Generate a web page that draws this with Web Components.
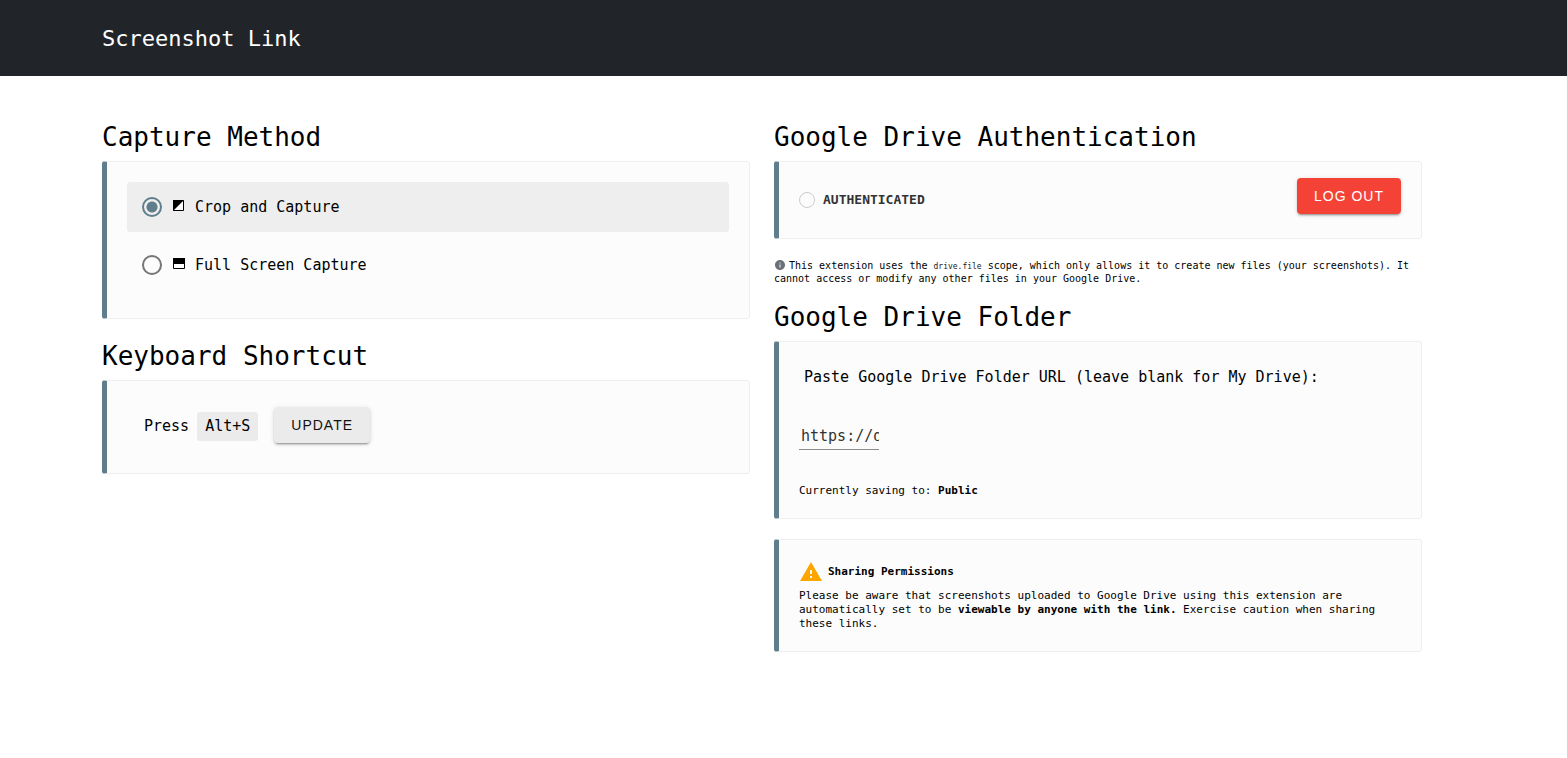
<!DOCTYPE html>
<html lang="en">
<head>
<meta charset="utf-8">
<meta name="viewport" content="width=device-width, initial-scale=1">
<title>Screenshot Link</title>
<style>
  body { margin: 0; background: #fff; color: #000; font: 15px/20px "DejaVu Sans Mono", monospace; }
</style>
</head>
<body>
<options-page></options-page>
<script>
const define = (name, html) => customElements.define(name, class extends HTMLElement {
  constructor() {
    super();
    const t = document.createElement('template');
    t.innerHTML = html;
    this.attachShadow({ mode: 'open' }).append(t.content.cloneNode(true));
  }
});

define('app-bar', `
  <style>
    :host { display: block; background: #212529; color: #fff; padding: 20px 102px 18px; }
    h1 { margin: 0; font-size: 22px; line-height: 38px; font-weight: 400; }
  </style>
  <header><h1><slot></slot></h1></header>`);

define('section-title', `
  <style>
    :host { display: block; }
    h2 { margin: 0 0 7px; font-size: 26px; line-height: 34px; font-weight: 400; }
  </style>
  <h2><slot></slot></h2>`);

define('option-card', `
  <style>
    :host { display: block; box-sizing: border-box; padding: var(--card-padding, 20px);
      background: #fcfcfc; border: 1px solid #eee; border-left: 5px solid #607d8b; border-radius: 3px; }
  </style>
  <slot></slot>`);

define('raised-button', `
  <style>
    :host { display: block; flex: none; }
    button { display: block; height: 36px; padding: 0 17px; border: 0; border-radius: 4px;
      background: var(--button-bg, #ebebeb); color: var(--button-fg, #111);
      font: 14px/36px "Liberation Sans", Arial, sans-serif; letter-spacing: 1px; text-transform: uppercase; cursor: pointer;
      box-shadow: 0 3px 1px -2px rgba(0,0,0,.2), 0 2px 2px 0 rgba(0,0,0,.14), 0 1px 5px 0 rgba(0,0,0,.12); }
  </style>
  <button type="button"><slot></slot></button>`);

define('capture-methods', `
  <style>
    :host { display: block; }
    label { display: flex; align-items: center; height: 50px; margin-bottom: 8px; padding-left: 15px; border-radius: 3px; }
    label:has(:checked) { background: #eee; }
    input { appearance: none; box-sizing: border-box; width: 20px; height: 20px; margin: 0 11px 0 0;
      border: 2px solid #757575; border-radius: 50%; }
    input:checked { border-color: #607d8b; background: radial-gradient(circle, #607d8b 5px, transparent 6px); }
    svg { width: 12px; height: 12px; margin: 0 10px 2px 0; }
  </style>
  <label><input type="radio" name="method" checked>
    <svg viewBox="0 0 12 12" aria-hidden="true"><path d="M.5 .5h10v10H.5z" fill="#fff" stroke="#000"/><path d="M0 0h11L0 11z"/></svg>
    <span>Crop and Capture</span></label>
  <label><input type="radio" name="method">
    <svg viewBox="0 0 12 12" aria-hidden="true"><path d="M.5 .5h11v10H.5z" fill="#fff" stroke="#000"/><path d="M0 0h12v6H0z"/></svg>
    <span>Full Screen Capture</span></label>`);

define('shortcut-row', `
  <style>
    :host { display: flex; align-items: flex-start; gap: 16px; min-height: 46px; padding: 6px 0 0 17px; }
    p { display: flex; gap: 8px; margin: 5px 0 0; line-height: 29px; }
    kbd { padding: 0 8px; background: #ebebeb; border-radius: 3px; font: inherit; }
  </style>
  <p>Press <kbd>Alt+S</kbd></p>
  <raised-button>Update</raised-button>`);

define('auth-status', `
  <style>
    :host { display: flex; align-items: flex-start; justify-content: space-between; }
    p { display: flex; align-items: center; gap: 8px; margin: 0; color: #333; font-size: 13px; line-height: 44px; font-weight: 700; }
    i { box-sizing: border-box; width: 16px; height: 16px; border: 1px solid #ccc; border-radius: 50%; }
    raised-button { --button-bg: #f44336; --button-fg: #fff; }
  </style>
  <p><i></i>AUTHENTICATED</p>
  <raised-button>Log out</raised-button>`);

define('scope-note', `
  <style>
    :host { display: block; font-size: 10px; line-height: 13px; }
    p { margin: 0; }
    svg { width: 12px; height: 12px; margin-right: 3px; vertical-align: -2px; }
    code { font: 8px/8px "DejaVu Sans Mono", monospace; color: #222; }
  </style>
  <p><svg viewBox="0 0 24 24" aria-hidden="true"><path fill="#6a7078" d="M12 2C6.480 2 2 6.480 2 12s4.480 10 10 10 10-4.480 10-10S17.520 2 12 2zm1 15h-2v-6h2v6zm0-8h-2V7h2v2z"/></svg>This extension uses the <code>drive.file</code> scope, which only allows it to create new files (your screenshots). It cannot access or modify any other files in your Google Drive.</p>`);

define('folder-field', `
  <style>
    :host { display: block; }
    label { display: block; padding-left: 5px; line-height: 30px; }
    input { display: block; box-sizing: border-box; width: 80px; height: 28px; margin: 30px 0 34px; padding: 0 0 0 2px;
      border: 0; border-bottom: 1px solid #8c8c8c; border-radius: 0; outline: 0; background: none; color: #333;
      font: 15px/20px "DejaVu Sans Mono", monospace; }
    p { margin: 0; font-size: 11px; line-height: 14px; }
  </style>
  <label for="folder">Paste Google Drive Folder URL (leave blank for My Drive):</label>
  <input id="folder" type="text" value="https://drive.google.com/drive/folders">
  <p>Currently saving to: <b>Public</b></p>`);

define('sharing-notice', `
  <style>
    :host { display: block; font-size: 11px; line-height: 14px; }
    h3 { display: flex; align-items: center; gap: 5px; height: 24px; margin: 0 0 5px; font-size: 11px; line-height: 14px; }
    svg { width: 24px; height: 24px; }
    p { margin: 0; }
  </style>
  <h3><svg viewBox="0 0 24 24" aria-hidden="true"><path fill="#ffa500" d="M1 21h22L12 2 1 21zm12-3h-2v-2h2v2zm0-4h-2v-4h2v4z"/></svg>Sharing Permissions</h3>
  <p>Please be aware that screenshots uploaded to Google Drive using this extension are automatically set to be <b>viewable by anyone with the link.</b> Exercise caution when sharing these links.</p>`);

define('options-page', `
  <style>
    :host { display: block; }
    main { display: grid; grid-template-columns: repeat(2, minmax(0, 1fr)); gap: 24px; align-items: start;
      max-width: 1320px; padding: 44px 102px; }
    option-card { margin-bottom: 20px; }
    .auth { --card-padding: 16px 20px; }
    scope-note { margin-bottom: 15px; }
    @media (max-width: 900px) { main { grid-template-columns: 1fr; padding: 24px; } }
  </style>
  <app-bar>Screenshot Link</app-bar>
  <main>
    <section>
      <section-title>Capture Method</section-title>
      <option-card><capture-methods></capture-methods></option-card>
      <section-title>Keyboard Shortcut</section-title>
      <option-card><shortcut-row></shortcut-row></option-card>
    </section>
    <section>
      <section-title>Google Drive Authentication</section-title>
      <option-card class="auth"><auth-status></auth-status></option-card>
      <scope-note></scope-note>
      <section-title>Google Drive Folder</section-title>
      <option-card><folder-field></folder-field></option-card>
      <option-card><sharing-notice></sharing-notice></option-card>
    </section>
  </main>`);
</script>
</body>
</html>
